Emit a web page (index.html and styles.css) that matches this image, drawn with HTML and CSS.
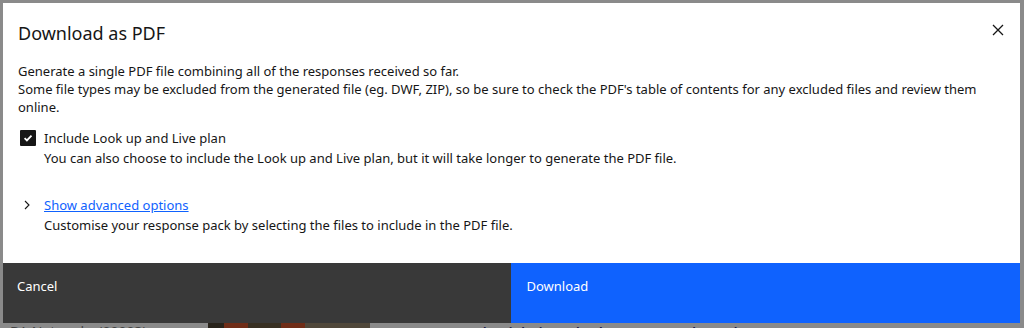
FILE: index.html
```html
<!DOCTYPE html>
<html lang="en">
<head>
    <meta charset="UTF-8">
    <meta name="viewport" content="width=device-width, initial-scale=1.0">
    <title>Download as PDF</title>
    <link rel="stylesheet" href="styles.css">
</head>
<body>
    <div class="page">
        <div class="page-row">
            <span class="page-supplier">BA Networks (00003)</span>
            <span class="page-thumb"></span>
            <span class="page-promo">You need with iseekplant's marketplace!</span>
        </div>
    </div>

    <div class="overlay">
        <div class="modal" role="dialog" aria-labelledby="modalTitle">
            <div class="modal-header">
                <h2 id="modalTitle">Download as PDF</h2>
                <button class="modal-close" aria-label="Close">
                    <svg width="16" height="16" viewBox="0 0 16 16" aria-hidden="true">
                        <path d="M3 3l10 10M13 3L3 13" stroke="#161616" stroke-width="1.3" fill="none"/>
                    </svg>
                </button>
            </div>

            <div class="modal-content">
                <p>Generate a single PDF file combining all of the responses received so far.<br>
                Some file types may be excluded from the generated file (eg. DWF, ZIP), so be sure to check the PDF's table of contents for any excluded files and review them online.</p>

                <div class="option">
                    <label class="checkbox">
                        <input type="checkbox" checked>
                        <span class="checkbox-box">
                            <svg width="12" height="12" viewBox="0 0 12 12" aria-hidden="true">
                                <path d="M2.6 6.2l2.3 2.2 4.6-4.8" stroke="#fff" stroke-width="1.8" fill="none"/>
                            </svg>
                        </span>
                        <span>Include Look up and Live plan</span>
                    </label>
                    <div class="helper">You can also choose to include the Look up and Live plan, but it will take longer to generate the PDF file.</div>
                </div>

                <div class="option advanced">
                    <div class="advanced-row">
                        <svg class="chevron" width="16" height="16" viewBox="0 0 16 16" aria-hidden="true">
                            <path d="M6 4l4 4-4 4" stroke="#161616" stroke-width="1.1" fill="none"/>
                        </svg>
                        <a href="#" class="link">Show advanced options</a>
                    </div>
                    <div class="helper">Customise your response pack by selecting the files to include in the PDF file.</div>
                </div>
            </div>

            <div class="modal-footer">
                <button class="btn btn-secondary">Cancel</button>
                <button class="btn btn-primary">Download</button>
            </div>
        </div>
    </div>
</body>
</html>
```

FILE: styles.css
```css
:root {
    --text-color: #161616;
    --primary-color: #0f62fe;
    --secondary-color: #393939;
}

* {
    box-sizing: border-box;
}

html {
    overflow: hidden;
}

body {
    font-family: 'Noto Sans', 'Open Sans', sans-serif;
    background-color: #ffffff;
    margin: 0;
    padding: 0;
    width: 1024px;
    height: 328px;
    overflow: hidden;
    position: relative;
}

/* page behind the modal */
.page {
    height: 328px;
    overflow: hidden;
    padding-top: 323px;
}

.page-row {
    display: flex;
    align-items: flex-start;
    gap: 38px;
    padding-left: 10px;
}

.page-supplier {
    color: #6f6f6f;
    font-size: 14px;
    line-height: 18px;
    width: 160px;
}

.page-thumb {
    width: 162px;
    height: 20px;
    background: linear-gradient(90deg, #3a3020 0 10%, #c8441a 10% 25%, #5a4a30 25% 45%, #c8441a 45% 60%, #8a7a60 60% 100%);
}

.page-promo {
    color: #1a237e;
    font-size: 20px;
    line-height: 24px;
    margin-left: -8px;
}

.overlay {
    position: absolute;
    inset: 0;
    background-color: rgba(22, 22, 22, 0.5);
    padding: 3px 4px 5px 3px;
}

.modal {
    background-color: #ffffff;
    width: 1017px;
    height: 320px;
    display: flex;
    flex-direction: column;
    color: var(--text-color);
}

.modal-header {
    display: flex;
    justify-content: space-between;
    align-items: flex-start;
    padding: 16px 14px 0 15px;
}

.modal-header h2 {
    margin: 0;
    font-size: 18px;
    font-weight: 400;
    line-height: 28px;
}

.modal-close {
    background: none;
    border: none;
    padding: 0;
    margin-top: 3px;
    width: 16px;
    height: 16px;
    cursor: pointer;
}

.modal-content {
    flex: 1;
    padding: 15px 40px 0 15px;
    font-size: 13px;
    line-height: 18px;
}

.modal-content p {
    margin: 0 0 13px;
}

.option {
    margin-bottom: 29px;
}

.checkbox {
    display: flex;
    align-items: center;
    gap: 8px;
}

.checkbox input {
    display: none;
}

.checkbox-box {
    width: 16px;
    height: 16px;
    margin-left: 2px;
    background-color: #161616;
    border-radius: 1px;
    display: flex;
    align-items: center;
    justify-content: center;
}

.helper {
    padding-left: 26px;
    margin-top: 2px;
}

.advanced-row {
    display: flex;
    align-items: center;
    gap: 9px;
}

.chevron {
    margin-left: 1px;
}

.link {
    color: var(--primary-color);
    text-decoration: underline;
}

.modal-footer {
    display: flex;
    height: 60px;
}

.btn {
    flex: 1;
    border: none;
    color: #ffffff;
    font-family: inherit;
    font-size: 13px;
    line-height: 18px;
    text-align: left;
    display: flex;
    align-items: flex-start;
    padding: 14px 14px;
    cursor: pointer;
}

.btn-secondary {
    background-color: var(--secondary-color);
}

.btn-primary {
    background-color: var(--primary-color);
    padding-left: 16px;
}
```
